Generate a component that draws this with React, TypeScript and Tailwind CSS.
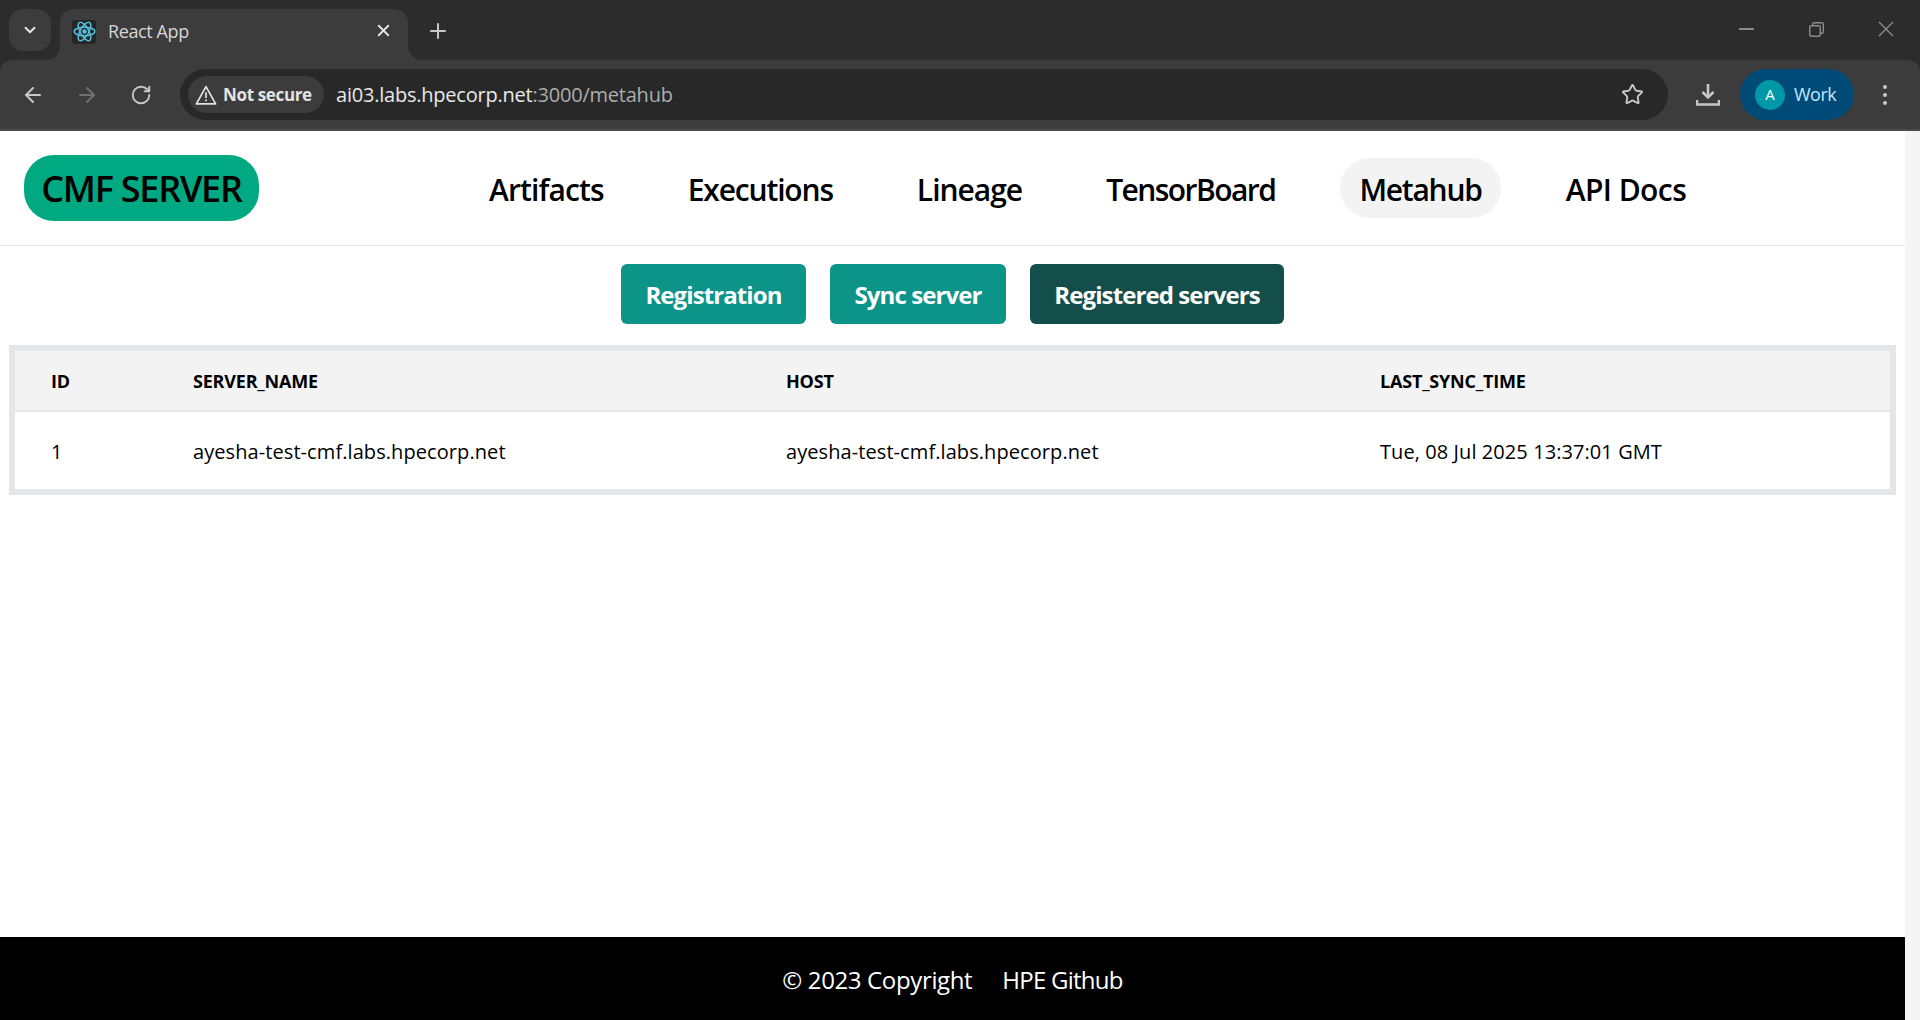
import { ArrowLeft, ArrowRight, RotateCw, Star, ChevronDown, X, Plus } from "lucide-react";

// tracking per item, the fallback font runs wider than the original on some words
const navItems = [
  { label: "Artifacts", tracking: "tracking-[-0.88px]" },
  { label: "Executions", tracking: "tracking-[-1.16px]" },
  { label: "Lineage", tracking: "tracking-[-1px]" },
  { label: "TensorBoard", tracking: "tracking-[-1.55px]" },
  { label: "Metahub", tracking: "tracking-[-1.25px]" },
  { label: "API Docs", tracking: "tracking-[-0.55px]" },
];

function ReactLogo() {
  return (
    <svg viewBox="0 0 24 24" className="w-[23px] h-[23px]" fill="none" stroke="#53c1de" strokeWidth="1.5">
      <circle cx="12" cy="12" r="2.3" fill="#53c1de" stroke="none" />
      <ellipse cx="12" cy="12" rx="10.8" ry="4.4" />
      <ellipse cx="12" cy="12" rx="10.8" ry="4.4" transform="rotate(60 12 12)" />
      <ellipse cx="12" cy="12" rx="10.8" ry="4.4" transform="rotate(120 12 12)" />
    </svg>
  );
}

function BrowserChrome() {
  return (
    <div className="shrink-0 bg-[#2c2c2c]">
      {/* Tab strip */}
      <div className="h-[60px] flex items-end pl-[9px] relative">
        <div className="w-[42px] h-[42px] mb-[9px] rounded-[14px] bg-[#3c3c3c] flex items-center justify-center">
          <ChevronDown size={18} strokeWidth={2.6} className="text-[#e3e3e3]" />
        </div>
        <div className="relative ml-[9px] w-[348px] h-[51px] bg-[#3c3c3c] rounded-t-[14px] flex items-center pl-[12px] pb-[6px]">
          <svg className="absolute left-[-14px] bottom-0 w-[14px] h-[14px]" viewBox="0 0 14 14"><path d="M14 0V14H0A14 14 0 0 0 14 0Z" fill="#3c3c3c" /></svg>
          <svg className="absolute right-[-14px] bottom-0 w-[14px] h-[14px]" viewBox="0 0 14 14"><path d="M0 0V14H14A14 14 0 0 1 0 0Z" fill="#3c3c3c" /></svg>
          <div className="w-[24px] h-[24px] rounded-[3px] bg-[#262626] flex items-center justify-center">
            <ReactLogo />
          </div>
          <span className="ml-[12px] text-[18px] tracking-[-0.4px] text-[#d6d6d6]">React App</span>
          <X size={19} strokeWidth={2.4} className="absolute right-[15px] top-[12px] text-[#e3e3e3]" />
        </div>
        <Plus size={24} strokeWidth={2} className="ml-[18px] mb-[17px] text-[#c7c7c7]" />
        <div className="ml-auto flex items-center h-[60px] pb-[2px]">
          <div className="w-[15px] h-[2px] bg-[#8c8c8c] mr-[55px]" />
          <svg className="w-[15px] h-[15px] mr-[54px]" viewBox="0 0 15 15" fill="none" stroke="#8c8c8c" strokeWidth="1.4">
            <rect x="0.7" y="3.7" width="10.6" height="10.6" rx="1.5" />
            <path d="M3.7 3.5V2.2A1.5 1.5 0 0 1 5.2 0.7H12.8A1.5 1.5 0 0 1 14.3 2.2V9.8A1.5 1.5 0 0 1 12.8 11.3H11.5" />
          </svg>
          <svg className="w-[16px] h-[16px] mr-[26px]" viewBox="0 0 16 16" stroke="#8c8c8c" strokeWidth="1.4">
            <path d="M1 1L15 15M15 1L1 15" />
          </svg>
        </div>
      </div>
      {/* Toolbar */}
      <div className="h-[71px] bg-[#3c3c3c] rounded-t-[12px] border-b-2 border-[#4a4a4a] flex items-center">
        <ArrowLeft size={24} strokeWidth={2} className="ml-[21px] text-[#c7c7c7]" />
        <ArrowRight size={24} strokeWidth={2} className="ml-[30px] text-[#6f6f6f]" />
        <RotateCw size={22} strokeWidth={2.1} className="ml-[31px] text-[#c7c7c7]" />
        <div className="ml-[28px] w-[1488px] h-[51px] rounded-full bg-[#282828] flex items-center pl-[8px]">
          <div className="w-[136px] h-[37px] rounded-full bg-[#3c3c3c] flex items-center pl-[7px]">
            <svg className="w-[22px] h-[20px]" viewBox="0 0 22 20" fill="none" stroke="#e3e3e3" strokeWidth="1.7">
              <path d="M11 1.6L20.6 18.9H1.4Z" strokeLinejoin="round" />
              <path d="M11 7.2V13" />
              <path d="M11 14.4V16.2" />
            </svg>
            <span className="ml-[6px] text-[17px] font-bold tracking-[-0.35px] text-[#e3e3e3]">Not secure</span>
          </div>
          <span className="ml-[12px] text-[20px] tracking-[-0.22px] text-[#e8e8e8]">
            ai03.labs.hpecorp.net<span className="text-[#adadad]">:3000/metahub</span>
          </span>
          <Star size={23} strokeWidth={2} className="ml-auto mr-[24px] text-[#c7c7c7]" />
        </div>
        <svg className="ml-[28px] w-[24px] h-[24px]" viewBox="0 0 24 24" fill="none" stroke="#c7c7c7">
          <path d="M12 1V13" strokeWidth="2.6" />
          <path d="M6.5 9L12 14.5L17.5 9" strokeWidth="2.6" />
          <path d="M1 17V21.5H23V17" strokeWidth="2.6" />
        </svg>
        <div className="ml-[20px] w-[114px] h-[51px] rounded-full bg-[#004a77] flex items-center pl-[15px]">
          <div className="w-[30px] h-[30px] rounded-full bg-[#0097a7] flex items-center justify-center text-[15px] text-white">A</div>
          <span className="ml-[9px] text-[18px] tracking-[-0.5px] text-[#c2e7ff]">Work</span>
        </div>
        <div className="ml-[29px] flex flex-col gap-[4px]">
          <div className="w-[4px] h-[4px] rounded-full bg-[#c7c7c7]" />
          <div className="w-[4px] h-[4px] rounded-full bg-[#c7c7c7]" />
          <div className="w-[4px] h-[4px] rounded-full bg-[#c7c7c7]" />
        </div>
      </div>
    </div>
  );
}

export default function App() {
  return (
    <div className="h-screen flex flex-col overflow-hidden bg-white font-['Open_Sans',sans-serif]">
      <BrowserChrome />
      <div className="flex-1 flex min-h-0">
        <div className="flex-1 flex flex-col min-w-0">
          {/* Header */}
          <header className="h-[115px] shrink-0 border-b border-[#e5e7eb] flex items-center pl-[24px] pb-[1px]">
            <div className="w-[235px] h-[66px] pt-[3px] rounded-[30px] bg-[#01a982] flex items-center justify-center text-[36px] font-semibold tracking-[-1.25px] text-black">
              CMF SERVER
            </div>
            <nav className="ml-[211px] flex items-center gap-[46px] mt-[1px]">
              {navItems.map((item) => (
                <a
                  key={item.label}
                  className={`h-[60px] px-[19px] pt-[2px] rounded-[30px] flex items-center text-[30px] font-semibold text-black ${item.tracking} ${
                    item.label === "Metahub" ? "bg-[#f3f3f4]" : ""
                  }`}
                >
                  {item.label}
                </a>
              ))}
            </nav>
          </header>

          {/* Tabs */}
          <div className="mt-[18px] flex justify-center gap-[24px] text-[24px] font-bold tracking-[-0.9px] text-white">
            <button className="w-[185px] h-[60px] pt-[2px] rounded-md bg-[#0d9488]">Registration</button>
            <button className="w-[176px] h-[60px] pt-[2px] rounded-md bg-[#0d9488]">Sync server</button>
            <button className="w-[254px] h-[60px] pt-[2px] rounded-md bg-[#134e4a]">Registered servers</button>
          </div>

          {/* Servers table */}
          <div className="mt-[21px] mx-[9px]">
            <table className="w-full table-fixed border-[6px] border-[#e5e6ea] text-left text-black">
              <colgroup>
                <col className="w-[145px]" />
                <col className="w-[593px]" />
                <col className="w-[594px]" />
                <col />
              </colgroup>
              <thead>
                <tr className="h-[63px] bg-[#f3f3f4] border-b-2 border-[#e5e6ea] text-[18px] uppercase tracking-[-0.2px]">
                  <th className="pl-[36px] pt-[2px] font-bold">ID</th>
                  <th className="pl-[36px] pt-[2px] font-bold">server_name</th>
                  <th className="pl-[36px] pt-[2px] font-bold">host</th>
                  <th className="pl-[36px] pt-[2px] font-bold">last_sync_time</th>
                </tr>
              </thead>
              <tbody>
                <tr className="h-[81px] text-[20px] tracking-[0.08px]">
                  <td className="pl-[36px] pt-[2px]">1</td>
                  <td className="pl-[36px] pt-[2px]">ayesha-test-cmf.labs.hpecorp.net</td>
                  <td className="pl-[36px] pt-[2px]">ayesha-test-cmf.labs.hpecorp.net</td>
                  <td className="pl-[36px] pt-[2px]">Tue, 08 Jul 2025 13:37:01 GMT</td>
                </tr>
              </tbody>
            </table>
          </div>

          {/* Footer */}
          <footer className="mt-auto h-[83px] shrink-0 bg-black flex items-center justify-center gap-[30px] pt-[3px] text-[24px] text-white">
            <span className="tracking-[-0.36px]">© 2023 Copyright</span>
            <span className="tracking-[-0.75px]">HPE Github</span>
          </footer>
        </div>
        <div className="w-[15px] shrink-0 bg-[#f5f5f5]" />
      </div>
    </div>
  );
}
